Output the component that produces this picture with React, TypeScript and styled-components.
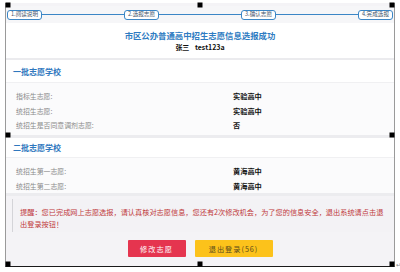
import React from "react";
import styled, { createGlobalStyle } from "styled-components";

const GlobalStyle = createGlobalStyle`
  html, body {
    margin: 0;
    padding: 0;
    background: #ffffff;
    font-family: "Noto Sans CJK SC", "Noto Sans", sans-serif;
  }
`;

const Frame = styled.div`
  position: relative;
  box-sizing: border-box;
  margin: 3px 0 0 5px;
  width: 390px;
  height: 264px;
  border-left: 1px solid #9a9a9a;
  border-right: 1px solid #9a9a9a;
  border-bottom: 1px solid #1a1a1a;
  background: #f4f3f6;
  display: flex;
  flex-direction: column;
`;

const Handle = styled.span<{ $x: string; $y: string }>`
  position: absolute;
  width: 5px;
  height: 5px;
  background: #000;
  left: ${(p) => p.$x};
  top: ${(p) => p.$y};
  transform: translate(-50%, -50%);
  z-index: 2;
`;

const Return = styled.span`
  position: absolute;
  right: -7px;
  bottom: -2px;
  font-size: 6px;
  color: #888;
  font-family: "DejaVu Sans", sans-serif;
`;

const StepBar = styled.div`
  display: flex;
  align-items: center;
  height: 17px;
  padding: 0 1px;
  margin-top: 3px;
  background: #f6f6f8;
`;

const Step = styled.div`
  box-sizing: border-box;
  height: 10px;
  padding: 0 3px;
  border: 1.5px solid #3b86c6;
  border-radius: 3px;
  background: #fff;
  color: #44546a;
  font-size: 5.6px;
  line-height: 7px;
  white-space: nowrap;
`;

const StepLine = styled.div`
  flex: 1;
  height: 1.5px;
  background: #3b86c6;
`;

const Header = styled.div`
  background: #ffffff;
  height: 34px;
  display: flex;
  flex-direction: column;
  align-items: center;
  justify-content: center;
  gap: 3px;
  padding-top: 1px;
  border-bottom: 2px solid #ebebee;
`;

const Title = styled.div`
  color: #2f7cc2;
  font-size: 8.4px;
  font-weight: 700;
  line-height: 10px;
`;

const Name = styled.div`
  color: #111;
  font-size: 7px;
  font-weight: 700;
  line-height: 9px;
  word-spacing: 4px;
`;

const Section = styled.div<{ $h: number }>`
  background: #fbfbfc;
  height: ${(p) => p.$h}px;
  flex-shrink: 0;
  border-bottom: 3px solid #ececef;
  display: flex;
  flex-direction: column;
`;

const SectionHead = styled.div`
  height: 22px;
  padding-left: 7px;
  display: flex;
  align-items: center;
  color: #2f78be;
  font-size: 8px;
  font-weight: 700;
  background: #ffffff;
  border-bottom: 1px solid #f0f0f2;
`;

const Rows = styled.div<{ $top: number }>`
  padding-top: ${(p) => p.$top}px;
  display: flex;
  flex-direction: column;
`;

const Row = styled.div`
  display: flex;
  height: 14.5px;
  align-items: center;
  padding-left: 10px;
`;

const Label = styled.div`
  width: 217px;
  color: #8a8a8a;
  font-size: 6.9px;
`;

const Value = styled.div`
  color: #111;
  font-size: 7.2px;
  font-weight: 700;
`;

const Notice = styled.div`
  margin: 3px 0 0 6px;
  padding: 7px 6px 2px 7px;
  border-left: 1px solid #d4d4d8;
  background: #f3f2f5;
  color: #c0393b;
  font-size: 7.2px;
  line-height: 12px;
`;

const Buttons = styled.div`
  display: flex;
  justify-content: center;
  gap: 9px;
  margin-top: 8px;
`;

const Button = styled.div<{ $bg: string; $fg: string; $w: number }>`
  width: ${(p) => p.$w}px;
  height: 17px;
  background: ${(p) => p.$bg};
  color: ${(p) => p.$fg};
  display: flex;
  align-items: center;
  justify-content: center;
  font-size: 7.2px;
  letter-spacing: 1px;
  border-radius: 1px;
`;

const steps = ["1.阅读说明", "2.选报志愿", "3.确认志愿", "4.完成选报"];

const App: React.FC = () => {
  return (
    <>
      <GlobalStyle />
      <Frame>
        <Handle $x="2px" $y="2px" />
        <Handle $x="50%" $y="2px" />
        <Handle $x="calc(100% - 2px)" $y="2px" />
        <Handle $x="2px" $y="50%" />
        <Handle $x="calc(100% - 2px)" $y="50%" />
        <Handle $x="2px" $y="calc(100% - 2px)" />
        <Handle $x="50%" $y="calc(100% - 2px)" />
        <Handle $x="calc(100% - 2px)" $y="calc(100% - 2px)" />
        <Return>↵</Return>

        <StepBar>
          {steps.map((s, i) => (
            <React.Fragment key={s}>
              {i > 0 && <StepLine />}
              <Step>{s}</Step>
            </React.Fragment>
          ))}
        </StepBar>

        <Header>
          <Title>市区公办普通高中招生志愿信息选报成功</Title>
          <Name>张三 test123a</Name>
        </Header>

        <Section $h={75}>
          <SectionHead>一批志愿学校</SectionHead>
          <Rows $top={6}>
            <Row>
              <Label>指标生志愿:</Label>
              <Value>实验高中</Value>
            </Row>
            <Row>
              <Label>统招生志愿:</Label>
              <Value>实验高中</Value>
            </Row>
            <Row>
              <Label>统招生是否同意调剂志愿:</Label>
              <Value>否</Value>
            </Row>
          </Rows>
        </Section>

        <Section $h={55}>
          <SectionHead>二批志愿学校</SectionHead>
          <Rows $top={6}>
            <Row>
              <Label>统招生第一志愿:</Label>
              <Value>黄海高中</Value>
            </Row>
            <Row>
              <Label>统招生第二志愿:</Label>
              <Value>黄海高中</Value>
            </Row>
          </Rows>
        </Section>

        <Notice>
          提醒：您已完成网上志愿选报，请认真核对志愿信息，您还有2次修改机会，为了您的信息安全，退出系统请点击退出登录按钮！
        </Notice>

        <Buttons>
          <Button $bg="#e5354f" $fg="#ffffff" $w={58}>
            修改志愿
          </Button>
          <Button $bg="#fcc21b" $fg="#5a4a1a" $w={78}>
            退出登录(56)
          </Button>
        </Buttons>
      </Frame>
    </>
  );
};

export default App;
